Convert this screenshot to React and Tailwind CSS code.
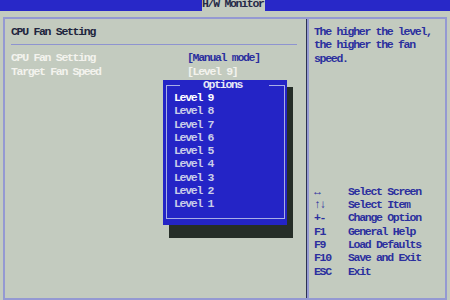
import React from 'react';

const keys = [
  ['↔', 'Select Screen'],
  ['↑↓', 'Select Item'],
  ['+-', 'Change Option'],
  ['F1', 'General Help'],
  ['F9', 'Load Defaults'],
  ['F10', 'Save and Exit'],
  ['ESC', 'Exit'],
];

const levels = ['9', '8', '7', '6', '5', '4', '3', '2', '1'];

export default function App() {
  return (
    <div className="relative w-[450px] h-[300px] overflow-hidden bg-[#c3cbbf] font-['Liberation_Mono',monospace] font-bold text-[11.5px] tracking-[-1.3px] leading-[13.3px]">
      {/* top bar */}
      <div className="flex h-[11px] bg-[#2828c8] overflow-hidden">
        <div className="w-[202px]" />
        <div className="w-[63px] bg-[#c3cbbf] text-[#262a48]">
          <div className="-mt-[3px] whitespace-nowrap">H/W Monitor</div>
        </div>
      </div>

      {/* frame */}
      <div className="mt-[6px] mx-[3px] h-[283px] border-2 border-[#9499d2] flex">
        {/* left panel */}
        <div className="w-[301px] pl-[6px] pt-[6px]">
          <div className="text-[#20243c]">CPU Fan Setting</div>
          <div className="mt-[6px] h-px w-[286px] bg-[#8e94d0]" />
          <div className="mt-[6px]">
            <div className="flex">
              <div className="w-[176px] text-[#f3f3ee]">CPU Fan Setting</div>
              <div className="text-[#2b2f9e]">[Manual mode]</div>
            </div>
            <div className="flex">
              <div className="w-[176px] text-[#f3f3ee]">Target Fan Speed</div>
              <div className="text-[#f3f3ee]">[Level 9]</div>
            </div>
          </div>
        </div>

        {/* divider */}
        <div className="w-px bg-[#2c3252]" />
        <div className="w-[2px] bg-[#9499d2]" />

        {/* right panel */}
        <div className="flex-1 pl-[5px] pt-[6px] text-[#2b2f9e]">
          <div>The higher the level,</div>
          <div>the higher the fan</div>
          <div>speed.</div>
          <div className="mt-[120px]">
            {keys.map(([k, d]) => (
              <div key={d} className="flex">
                <div className="w-[34px]">{k}</div>
                <div>{d}</div>
              </div>
            ))}
          </div>
        </div>
      </div>

      {/* popup shadow */}
      <div className="absolute left-[169px] top-[87px] w-[124px] h-[151px] bg-[#262e28]" />

      {/* options popup */}
      <div className="absolute left-[163px] top-[80px] w-[124px] h-[145px] bg-[#2424c6] pt-[5px] pl-[3px] pr-[2px]">
        <div className="h-[134px] border-x border-b border-[#a9aee6]">
          <div className="flex items-center h-0">
            <div className="w-[13px] h-px bg-[#a9aee6]" />
            <div className="w-[23px]" />
            <div className="text-[#e6e8f6] whitespace-nowrap">Options</div>
            <div className="flex-1" />
            <div className="w-[15px] h-px bg-[#a9aee6]" />
          </div>
          <div className="pt-[6px] pl-[7px]">
            {levels.map((l, i) => (
              <div key={l} className={i === 0 ? 'text-white' : 'text-[#c9cde9]'}>
                Level {l}
              </div>
            ))}
          </div>
        </div>
      </div>
    </div>
  );
}
